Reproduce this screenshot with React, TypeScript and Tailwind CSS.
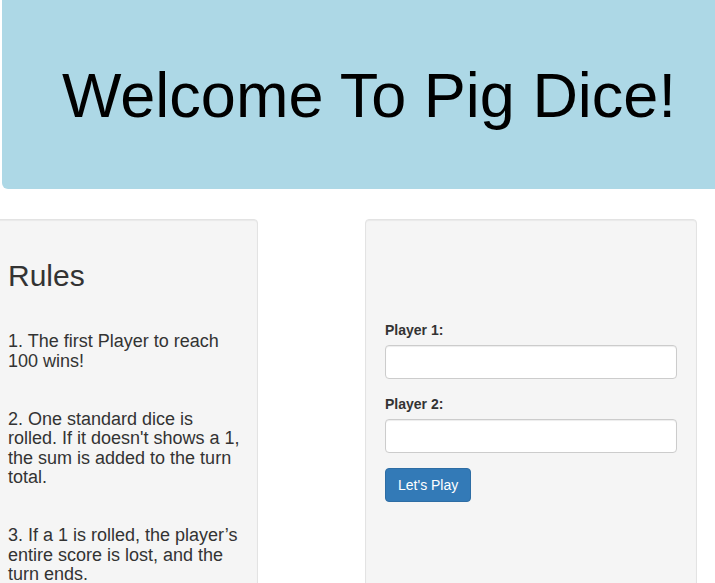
const rules = [
  "1. The first Player to reach 100 wins!",
  "2. One standard dice is rolled. If it doesn't shows a 1, the sum is added to the turn total.",
  "3. If a 1 is rolled, the player\u2019s entire score is lost, and the turn ends.",
];

const gaps = ["mt-[40px]", "mt-[38.5px]", "mt-[38.5px]"];

const App = () => {
  return (
    <div className="h-screen w-full overflow-hidden bg-white font-['Liberation_Sans',Arial,sans-serif] text-[#333]">
      <div className="ml-[2px] h-[189px] w-[760px] rounded-bl-md bg-[#add8e6] pl-[60px] pt-[61px]">
        <h1 className="text-[63px] leading-[1.1] text-black">Welcome To Pig Dice!</h1>
      </div>

      <div className="mt-[30px] flex items-start">
        <div className="-ml-[12px] h-[420px] w-[270px] shrink-0 rounded border border-[#e3e3e3] bg-[#f5f5f5] py-[19px] pl-[19px] pr-[12px] shadow-[inset_0_1px_1px_rgba(0,0,0,0.05)]">
          <h2 className="mt-[20px] text-[30px] leading-[33px]">Rules</h2>
          {rules.map((rule, i) => (
            <h4 key={i} className={`${gaps[i]} text-[18px] leading-[19.5px]`}>
              {rule}
            </h4>
          ))}
        </div>

        <div className="ml-[107px] h-[420px] w-[332px] shrink-0 rounded border border-[#e3e3e3] bg-[#f5f5f5] p-[19px] shadow-[inset_0_1px_1px_rgba(0,0,0,0.05)]">
          <form className="mt-[81px]" onSubmit={(e) => e.preventDefault()}>
            <div className="mb-[15px]">
              <label className="mb-[5px] block text-[14px] font-bold leading-5">Player 1:</label>
              <input
                type="text"
                className="block h-[34px] w-full rounded border border-[#ccc] bg-white px-3 text-[14px] shadow-[inset_0_1px_1px_rgba(0,0,0,0.075)] outline-none"
              />
            </div>
            <div className="mb-[15px]">
              <label className="mb-[5px] block text-[14px] font-bold leading-5">Player 2:</label>
              <input
                type="text"
                className="block h-[34px] w-full rounded border border-[#ccc] bg-white px-3 text-[14px] shadow-[inset_0_1px_1px_rgba(0,0,0,0.075)] outline-none"
              />
            </div>
            <button
              type="submit"
              className="h-[34px] rounded border border-[#2e6da4] bg-[#337ab7] px-3 text-[14px] leading-5 text-white"
            >
              Let's Play
            </button>
          </form>
        </div>
      </div>
    </div>
  );
};

export default App;
